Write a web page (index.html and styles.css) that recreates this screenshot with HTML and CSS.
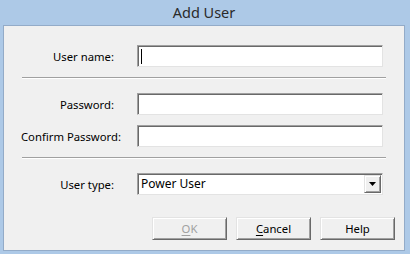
FILE: index.html
```html
<!DOCTYPE html>
<html>
<head>
<meta charset="utf-8">
<link rel="stylesheet" href="styles.css">
</head>
<body>
<div class="window">
  <div class="titlebar">Add User</div>
  <div class="client">
    <div class="row first">
      <label class="lbl">User name:</label>
      <div class="field"><span class="caret"></span></div>
    </div>
    <div class="sep"></div>
    <div class="row after-sep">
      <label class="lbl">Password:</label>
      <div class="field"></div>
    </div>
    <div class="row second">
      <label class="lbl wide">Confirm Password:</label>
      <div class="field"></div>
    </div>
    <div class="sep"></div>
    <div class="row after-sep">
      <label class="lbl">User type:</label>
      <div class="field combo">
        <span class="combo-text">Power User</span>
        <span class="drop"><svg width="7" height="4" viewBox="0 0 7 4"><path d="M0 0h7L3.5 4z" fill="#000"/></svg></span>
      </div>
    </div>
    <div class="buttons">
      <div class="btn disabled"><u>O</u>K</div>
      <div class="btn"><u>C</u>ancel</div>
      <div class="btn">Help</div>
    </div>
  </div>
</div>
</body>
</html>
```
FILE: styles.css
```css
html, body {
  margin: 0;
  padding: 0;
}
body {
  width: 410px;
  height: 254px;
  overflow: hidden;
  font-family: "Noto Sans", "Open Sans", sans-serif;
  font-size: 11.3px;
  color: #000;
}
.window {
  width: 410px;
  height: 254px;
  background: #adc9e7;
  box-sizing: border-box;
  padding: 0 5px 3px 3px;
  display: flex;
  flex-direction: column;
}
.titlebar {
  height: 25px;
  line-height: 24px;
  text-align: center;
  font-family: "Noto Sans", sans-serif;
  font-size: 14.5px;
  color: #2a2a2a;
  flex: none;
}
.client {
  flex: 1;
  background: #f0f0f0;
  border: 1px solid #93abc8;
  padding: 19px 0 0 0;
  display: flex;
  flex-direction: column;
}
.row {
  display: flex;
  align-items: center;
  height: 22px;
}
.row.second { margin-top: 10px; }
.row.after-sep { margin-top: 14px; }
.lbl {
  width: 117px;
  box-sizing: border-box;
  padding-right: 7px;
  text-align: right;
  white-space: nowrap;
  flex: none;
}
.lbl.wide { padding-right: 0; }
.field {
  margin-left: 16px;
  width: 246px;
  height: 22px;
  box-sizing: border-box;
  background: #fff;
  border-top: 1px solid #a0a0a0;
  border-left: 1px solid #a0a0a0;
  border-bottom: 1px solid #e3e3e3;
  border-right: 1px solid #e3e3e3;
  box-shadow: inset 1px 1px 0 #696969;
  position: relative;
  flex: none;
}
.caret {
  position: absolute;
  left: 3px;
  top: 3px;
  width: 1px;
  height: 15px;
  background: #000;
}
.sep {
  margin: 10px 18px 0 18px;
  height: 1px;
  background: #a0a0a0;
  border-bottom: 1px solid #fff;
}
.combo {
  display: flex;
  align-items: center;
  justify-content: space-between;
  padding: 0 1px 0 3px;
  font-size: 12px;
}
.combo-text {
  line-height: 18px;
}
.drop {
  width: 17px;
  height: 18px;
  box-sizing: border-box;
  background: #f0f0f0;
  border-top: 1px solid #e3e3e3;
  border-left: 1px solid #e3e3e3;
  border-right: 1px solid #696969;
  border-bottom: 1px solid #696969;
  box-shadow: inset 1px 1px 0 #fff, inset -1px -1px 0 #a0a0a0;
  display: flex;
  align-items: center;
  justify-content: center;
}
.buttons {
  display: flex;
  justify-content: flex-end;
  gap: 9px;
  margin-top: 22px;
  padding-right: 9px;
}
.btn {
  width: 75px;
  height: 23px;
  box-sizing: border-box;
  background: #f0f0f0;
  border-top: 1px solid #e3e3e3;
  border-left: 1px solid #e3e3e3;
  border-right: 1px solid #696969;
  border-bottom: 1px solid #696969;
  box-shadow: inset 1px 1px 0 #fff, inset -1px -1px 0 #a0a0a0;
  display: flex;
  align-items: center;
  justify-content: center;
  line-height: 1;
}
.btn u { text-decoration: underline; text-underline-offset: 2px; }
.btn.disabled { color: #a0a0a0; }
```
